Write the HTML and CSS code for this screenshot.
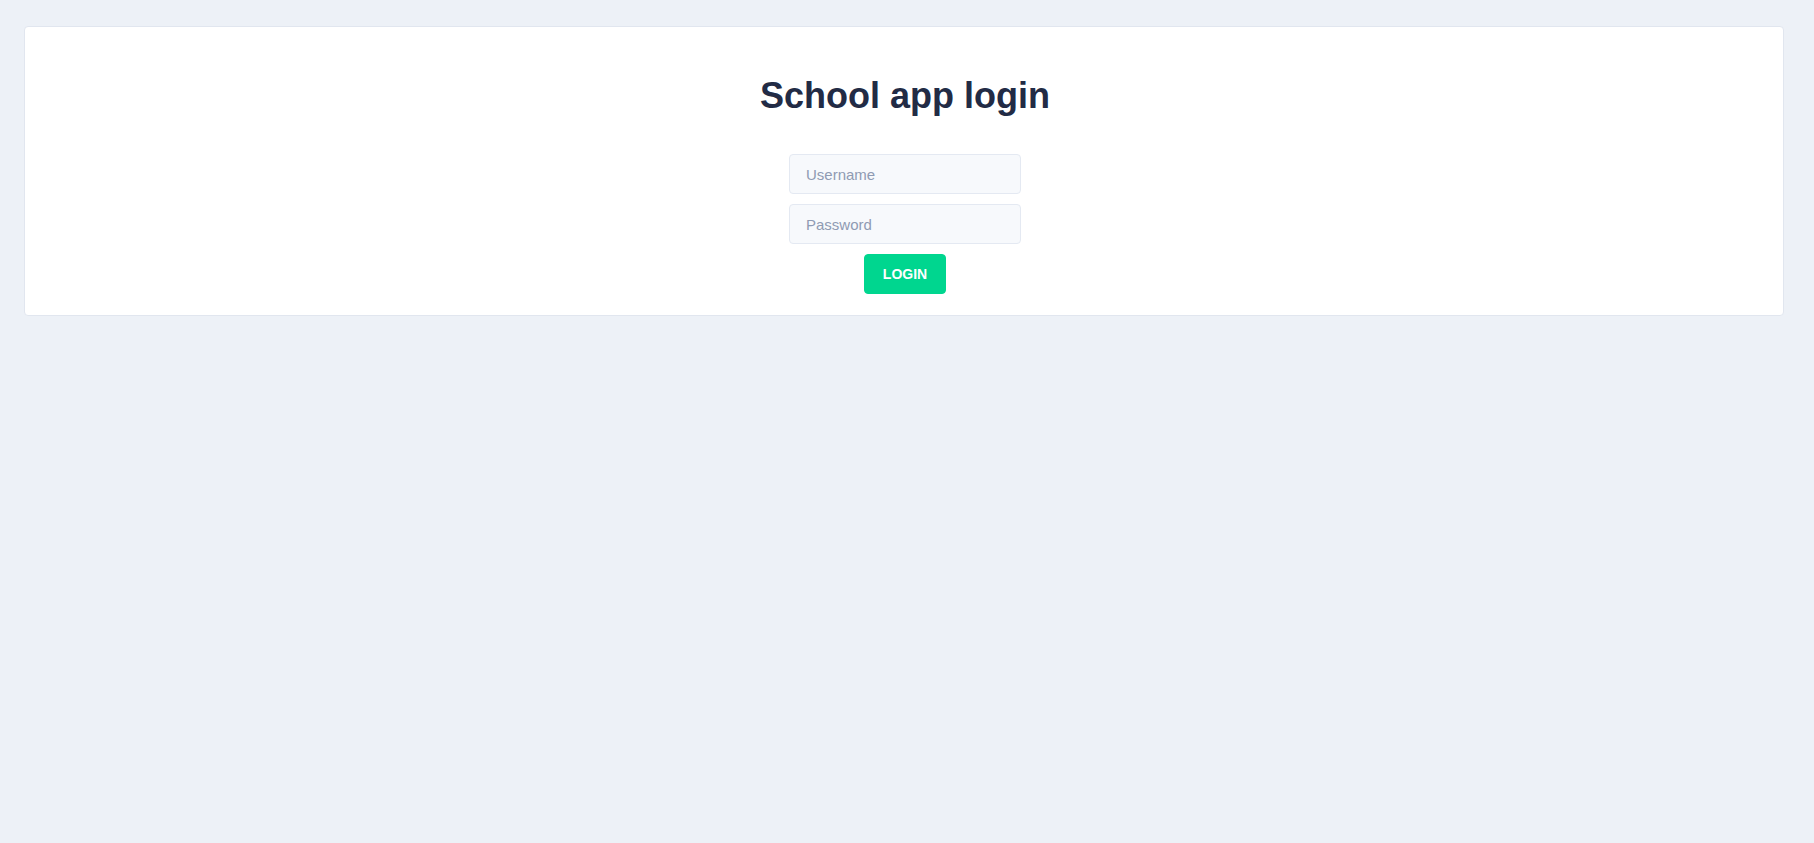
FILE: index.html
```html
<!DOCTYPE html>
<html lang="en">
<head>
<meta charset="utf-8">
<title>School app login</title>
<link rel="stylesheet" href="styles.css">
</head>
<body>
  <main class="layout">
    <section class="card">
      <h1 class="title">School app login</h1>
      <form class="form">
        <input class="input" type="text" placeholder="Username">
        <input class="input" type="password" placeholder="Password">
        <button class="btn" type="button">LOGIN</button>
      </form>
    </section>
  </main>
</body>
</html>
```

FILE: styles.css
```css
* {
  box-sizing: border-box;
}

html, body {
  margin: 0;
  padding: 0;
  background: #edf1f7;
  font-family: "Liberation Sans", Arial, sans-serif;
  color: #222b45;
}

.layout {
  padding: 26px 30px 0 24px;
}

.card {
  background: #ffffff;
  border: 1px solid #e1e6ef;
  border-radius: 4px;
  padding: 49px 24px 21px 26px;
  display: flex;
  flex-direction: column;
  align-items: center;
}

.title {
  margin: 0;
  font-size: 36px;
  line-height: 40px;
  font-weight: 700;
  color: #222b45;
}

.form {
  margin-top: 38px;
  display: flex;
  flex-direction: column;
  align-items: center;
  gap: 10px;
}

.input {
  width: 232px;
  height: 40px;
  padding: 7px 16px;
  font-family: inherit;
  font-size: 15px;
  line-height: 24px;
  color: #222b45;
  background: #f7f9fc;
  border: 1px solid #e4e9f2;
  border-radius: 4px;
  outline: none;
}

.input::placeholder {
  color: #8f9bb3;
  opacity: 1;
}

.btn {
  height: 40px;
  padding: 11px 18px;
  font-family: inherit;
  font-size: 14px;
  line-height: 16px;
  font-weight: 700;
  color: #ffffff;
  background: #00d68f;
  border: 1px solid #00d68f;
  border-radius: 4px;
  cursor: pointer;
}
```
